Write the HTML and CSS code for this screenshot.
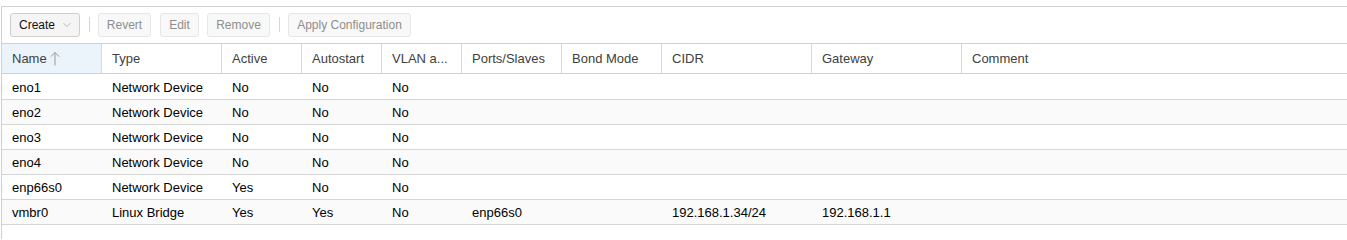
FILE: index.html
```html
<!DOCTYPE html>
<html>
<head>
<meta charset="utf-8">
<link rel="stylesheet" href="styles.css">
</head>
<body>
<div class="panel">
  <div class="toolbar">
    <button class="btn btn-create">Create
      <svg class="caret" width="9" height="6" viewBox="0 0 9 6"><path d="M0.5 0.8 L4.5 4.8 L8.5 0.8" fill="none" stroke="#b0b0b0" stroke-width="1"/></svg>
    </button>
    <span class="sep"></span>
    <button class="btn btn-disabled w-revert">Revert</button>
    <button class="btn btn-disabled w-edit">Edit</button>
    <button class="btn btn-disabled w-remove">Remove</button>
    <span class="sep"></span>
    <button class="btn btn-disabled w-apply">Apply Configuration</button>
  </div>
  <div class="grid">
    <div class="row head">
      <div class="hc sorted">Name <svg class="sort" width="10" height="15" viewBox="0 0 10 15"><path d="M5 1.5 V14.5 M0.8 5.7 L5 1.5 L9.2 5.7" fill="none" stroke="#9a9a9a" stroke-width="1"/></svg></div>
      <div class="hc">Type</div>
      <div class="hc">Active</div>
      <div class="hc">Autostart</div>
      <div class="hc" title="VLAN aware">VLAN a...</div>
      <div class="hc">Ports/Slaves</div>
      <div class="hc">Bond Mode</div>
      <div class="hc">CIDR</div>
      <div class="hc">Gateway</div>
      <div class="hc last">Comment</div>
    </div>
    <div class="row first">
      <div class="c">eno1</div><div class="c">Network Device</div><div class="c">No</div><div class="c">No</div><div class="c">No</div><div class="c"></div><div class="c"></div><div class="c"></div><div class="c"></div><div class="c"></div>
    </div>
    <div class="row alt">
      <div class="c">eno2</div><div class="c">Network Device</div><div class="c">No</div><div class="c">No</div><div class="c">No</div><div class="c"></div><div class="c"></div><div class="c"></div><div class="c"></div><div class="c"></div>
    </div>
    <div class="row">
      <div class="c">eno3</div><div class="c">Network Device</div><div class="c">No</div><div class="c">No</div><div class="c">No</div><div class="c"></div><div class="c"></div><div class="c"></div><div class="c"></div><div class="c"></div>
    </div>
    <div class="row alt">
      <div class="c">eno4</div><div class="c">Network Device</div><div class="c">No</div><div class="c">No</div><div class="c">No</div><div class="c"></div><div class="c"></div><div class="c"></div><div class="c"></div><div class="c"></div>
    </div>
    <div class="row">
      <div class="c">enp66s0</div><div class="c">Network Device</div><div class="c">Yes</div><div class="c">No</div><div class="c">No</div><div class="c"></div><div class="c"></div><div class="c"></div><div class="c"></div><div class="c"></div>
    </div>
    <div class="row alt">
      <div class="c">vmbr0</div><div class="c">Linux Bridge</div><div class="c">Yes</div><div class="c">Yes</div><div class="c">No</div><div class="c">enp66s0</div><div class="c"></div><div class="c">192.168.1.34/24</div><div class="c">192.168.1.1</div><div class="c"></div>
    </div>
  </div>
</div>
</body>
</html>
```

FILE: styles.css
```css
html, body {
  margin: 0;
  padding: 0;
  background: #fff;
  overflow: hidden;
}
body {
  font-family: "Liberation Sans", Arial, Helvetica, sans-serif;
  font-size: 13px;
  color: #000;
}
.panel {
  margin: 6px 0 0 1px;
  border-top: 1px solid #d0d0d0;
  border-left: 1px solid #d0d0d0;
  height: calc(100vh - 7px);
  box-sizing: border-box;
}
.toolbar {
  display: flex;
  align-items: center;
  box-sizing: border-box;
  height: 37px;
  padding: 0 8px 1px 8px;
  border-bottom: 1px solid #d0d0d0;
}
.btn {
  font-family: inherit;
  font-size: 12px;
  height: 24px;
  box-sizing: border-box;
  padding: 0 8px;
  border-radius: 3px;
  display: inline-flex;
  align-items: center;
  justify-content: center;
  margin: 0;
}
.btn-create {
  background: #f5f5f5;
  border: 1px solid #cfcfcf;
  color: #111;
  width: 70px;
  justify-content: flex-start;
}
.caret {
  margin-left: 8px;
  margin-top: 1px;
}
.btn-disabled {
  background: #f8f8f8;
  border: 1px solid #e6e6e6;
  color: #8e8e8e;
}
.w-revert { width: 53px; margin-right: 9px; }
.w-edit { width: 39px; margin-right: 8px; }
.w-remove { width: 63px; }
.w-apply { width: 123px; }
.sep {
  width: 1px;
  height: 15px;
  background: #d6d6d6;
  margin: 0 8px 0 9px;
}
.row {
  display: grid;
  grid-template-columns: 100px 120px 80px 80px 80px 100px 100px 150px 150px 1fr;
  border-bottom: 1px solid #d6d6d6;
  height: 25px;
  box-sizing: border-box;
}
.row.first {
  height: 26px;
  border-top: 1px solid #fff;
}
.row.alt { background: #fafafa; }
.row.head {
  height: 30px;
  border-bottom: 1px solid #d0d0d0;
}
.hc {
  color: #404040;
  padding: 0 10px;
  border-right: 1px solid #d8d8d8;
  display: flex;
  align-items: center;
  white-space: nowrap;
  overflow: hidden;
  min-width: 0;
}
.hc.last { border-right: none; }
.hc.sorted { background: #ebf3fb; }
.hc .sort { margin-left: 3px; margin-top: -1px; }
.c {
  padding: 1px 10px 0 10px;
  line-height: 23px;
  white-space: nowrap;
  overflow: hidden;
}
```
